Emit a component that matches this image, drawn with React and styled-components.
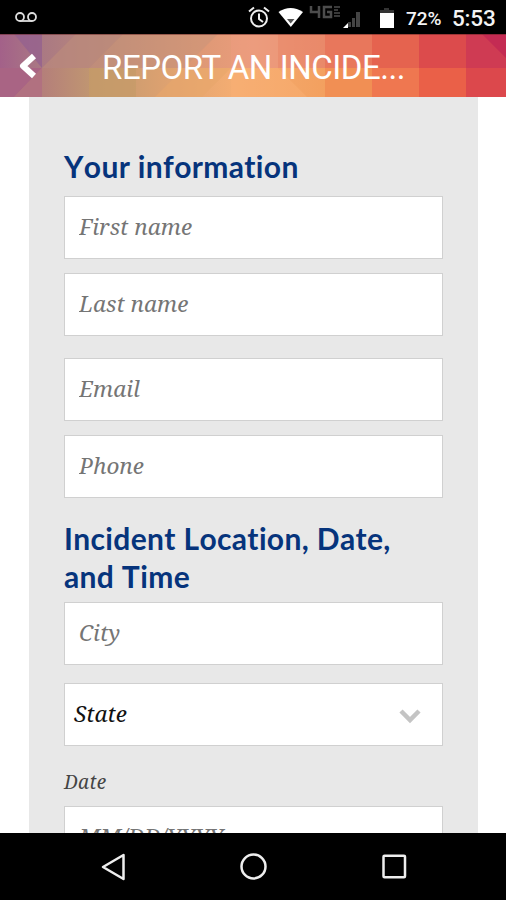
import React from "react";
import styled, { createGlobalStyle } from "styled-components";

const GlobalStyle = createGlobalStyle`
  * {
    box-sizing: border-box;
  }

  body {
    margin: 0;
    background: #fff;
  }
`;

const Screen = styled.div`
  width: 506px;
  height: 900px;
  display: flex;
  flex-direction: column;
  overflow: hidden;
  background: #fff;
`;

const StatusBar = styled.div`
  flex: none;
  height: 34px;
  display: flex;
  align-items: center;
  padding: 0 11px 0 14px;
  background: #000;
  color: #f4f4f4;
  font-family: Roboto, sans-serif;
`;

const StatusIcons = styled.svg`
  display: block;
  flex: none;
`;

const Spacer = styled.div`
  flex: 1;
`;

const Battery = styled.span`
  width: 46px;
  font-size: 19px;
  font-weight: 500;
  letter-spacing: -0.1px;
  white-space: nowrap;
  padding-top: 3px;
`;

const Clock = styled.span`
  width: 43px;
  font-size: 22.5px;
  font-weight: 500;
  letter-spacing: -0.2px;
  white-space: nowrap;
  padding-top: 2px;
`;

const Header = styled.header`
  position: relative;
  flex: none;
  height: 63px;
  display: flex;
  align-items: center;
  padding-left: 17px;
`;

const Mosaic = styled.svg`
  position: absolute;
  inset: 0;
`;

const BackButton = styled.button`
  position: relative;
  width: 85px;
  padding: 0;
  border: 0;
  background: none;
  display: flex;
`;

const Title = styled.h1`
  position: relative;
  margin: 4px 0 0;
  color: #fff;
  font: 400 33px/40px Roboto, sans-serif;
  letter-spacing: -0.45px;
  white-space: nowrap;
`;

const Content = styled.main`
  flex: 1;
  min-height: 0;
  overflow: hidden;
  margin: 0 28px 0 29px;
  padding: 50px 35px 0;
  background: #e8e8e8;
  font-family: "Noto Serif", "Droid Serif", "DejaVu Serif Condensed", serif;
  font-style: italic;
`;

const SectionTitle = styled.h2`
  margin: 0;
  padding-bottom: ${(props) => props.$gap}px;
  color: #06347c;
  font: 700 30px/38px Lato, sans-serif;
  font-kerning: none;
  letter-spacing: 0.35px;
`;

const Input = styled.input`
  display: block;
  width: 379px;
  height: 63px;
  margin: 0 0 ${(props) => props.$gap || 0}px;
  padding: 0 15px 2px 14px;
  border: 1px solid #d0d0d0;
  border-radius: 0;
  background: #fff;
  color: #000;
  font: inherit;
  font-size: 22.5px;

  &::placeholder {
    color: #757575;
    opacity: 1;
  }
`;

const Select = styled.div`
  display: flex;
  align-items: center;
  justify-content: space-between;
  width: 379px;
  height: 63px;
  padding: 0 20px 3px 9px;
  border: 1px solid #d0d0d0;
  background: #fff;
  color: #111;
  font-size: 22.5px;

  svg {
    position: relative;
    top: 3px;
  }
`;

const Label = styled.label`
  display: block;
  height: 60px;
  padding-top: 21px;
  color: #444;
  font-size: 19px;
  line-height: 30px;
  letter-spacing: 0.3px;
`;

const NavBar = styled.nav`
  flex: none;
  height: 67px;
  background: #000;
`;

// Right hand columns of the mosaic: left edge, top cell, bottom cell
const cells = [
  [325, "#e8775c", "#f18f54"],
  [372, "#e5634f", "#ef7750"],
  [419, "#dc4b4c", "#ea6048"],
  [466, "#cf3b53", "#dc484c"],
];

function HeaderMosaic() {
  return (
    <Mosaic width="506" height="63" viewBox="0 0 506 63">
      <defs>
        <linearGradient id="upper" gradientUnits="userSpaceOnUse" x1="0" x2="325" y1="0" y2="0">
          <stop offset="0" stopColor="#a36189" />
          <stop offset="0.13" stopColor="#aa7983" />
          <stop offset="0.35" stopColor="#bd8b79" />
          <stop offset="0.6" stopColor="#dd9875" />
          <stop offset="0.78" stopColor="#eb9d7c" />
          <stop offset="1" stopColor="#e98766" />
        </linearGradient>
        <linearGradient id="lower" gradientUnits="userSpaceOnUse" x1="0" x2="325" y1="0" y2="0">
          <stop offset="0" stopColor="#aa6682" />
          <stop offset="0.13" stopColor="#b47f7a" />
          <stop offset="0.3" stopColor="#c29970" />
          <stop offset="0.5" stopColor="#dca170" />
          <stop offset="0.72" stopColor="#f4ad72" />
          <stop offset="1" stopColor="#f3a05f" />
        </linearGradient>
      </defs>
      <path d="M0 0h326v35H0z" fill="url(#upper)" />
      <path d="M0 34h326v29H0z" fill="url(#lower)" />
      <path d="M14 0h28v34z" fill="#95628f" opacity="0.8" />
      <path d="M0 34h42L14 63H0z" fill="#a96484" />
      <path d="M42 34 14 63h28z" fill="#b17180" />
      <path d="M76 0 42 34h47l34-34z" fill="#ba8a7c" opacity="0.7" />
      <path d="M123 0 89 34h95l34-34z" fill="#c7947a" opacity="0.5" />
      <path d="M89 34h47v29H89z" fill="#c69b68" opacity="0.75" />
      <path d="M184 34h47l-29 29h-47z" fill="#e7a66b" opacity="0.6" />
      <path d="M231 0h47v34h-47z" fill="#ed9b80" opacity="0.5" />
      <path d="M278 0h47v34h-47z" fill="#e98b6d" opacity="0.6" />
      <path d="M278 34 307 63h-76v-29z" fill="#faaf73" opacity="0.5" />
      {cells.map(([x, top, bottom]) => (
        <g key={x}>
          <rect x={x} width="48" height="35" fill={top} />
          <rect x={x} y="34" width="48" height="29" fill={bottom} />
        </g>
      ))}
      <path d="M482 0h24v24z" fill="#c42b53" />
      <path d="M0 0h506v1H0z" fill="#601f20" opacity="0.5" />
    </Mosaic>
  );
}

function App() {
  return (
    <Screen>
      <GlobalStyle />
      <StatusBar>
        <StatusIcons width="24" height="12" viewBox="0 0 24 12" fill="none" stroke="#ddd" strokeWidth="1.800">
          <circle cx="6" cy="6" r="4" />
          <circle cx="18" cy="6" r="4" />
          <path d="M6 10h12" />
        </StatusIcons>
        <Spacer />
        <StatusIcons width="158" height="34" viewBox="248 0 158 34">
          <g fill="none" stroke="#eee" strokeWidth="2">
            <circle cx="259" cy="18.500" r="8" />
            <path d="M259 13.500v5.500l4 3M249 11.500l5-4M269 11.500l-5-4" />
          </g>
          <path d="M278.500 12q12-8 24.500 0l-12.200 15z" fill="#fff" />
          <path d="M287 19h7.500l-3.800 4.500z" fill="#555" />
          <g fill="none" stroke="#4c4c4c" strokeWidth="2.500">
            <path d="M311 6v6h9M319 6v12M332 7h-8v10h7v-5h-4" />
            <path d="M334 7h6M334 10h4M334 13h6M334 16h6" strokeWidth="1.500" />
          </g>
          <path d="M348 27v-5h3v5zM352 27v-9h3v9zM356 27V12h4v15z" fill="#444" />
          <path d="M343 28h5v-5z" fill="#fff" />
          <path d="M380 10h4V8h5v2h5v4h-14z" fill="#333" />
          <path d="M380 13h14v15h-14z" fill="#fff" />
        </StatusIcons>
        <Battery>72%</Battery>
        <Clock>5:53</Clock>
      </StatusBar>
      <Header>
        <HeaderMosaic />
        <BackButton aria-label="Back">
          <svg width="22" height="28" viewBox="0 0 22 28">
            <path d="M17 4 6 14l11 10" fill="none" stroke="#fff" strokeWidth="6" strokeLinejoin="round" />
          </svg>
        </BackButton>
        <Title>REPORT AN INCIDE...</Title>
      </Header>
      <Content>
        <SectionTitle $gap={11}>Your information</SectionTitle>
        <Input placeholder="First name" $gap={14} />
        <Input placeholder="Last name" $gap={22} />
        <Input placeholder="Email" $gap={14} />
        <Input placeholder="Phone" $gap={21} />
        <SectionTitle $gap={7}>Incident Location, Date, and Time</SectionTitle>
        <Input placeholder="City" $gap={18} />
        <Select>
          State
          <svg width="24" height="16" viewBox="0 0 24 16">
            <path d="m3 3 9 9 9-9" fill="none" stroke="#c4c4c4" strokeWidth="4.500" />
          </svg>
        </Select>
        <Label>Date</Label>
        <Input placeholder="MM/DD/YYYY" />
      </Content>
      <NavBar>
        <svg width="506" height="67" fill="none" stroke="#eee" strokeWidth="2.500">
          <path d="M103 34 123.500 22v24z" strokeLinejoin="round" />
          <circle cx="253.500" cy="33.500" r="12" />
          <rect x="383.500" y="22.800" width="21.500" height="21.500" rx="1" />
        </svg>
      </NavBar>
    </Screen>
  );
}

export default App;
